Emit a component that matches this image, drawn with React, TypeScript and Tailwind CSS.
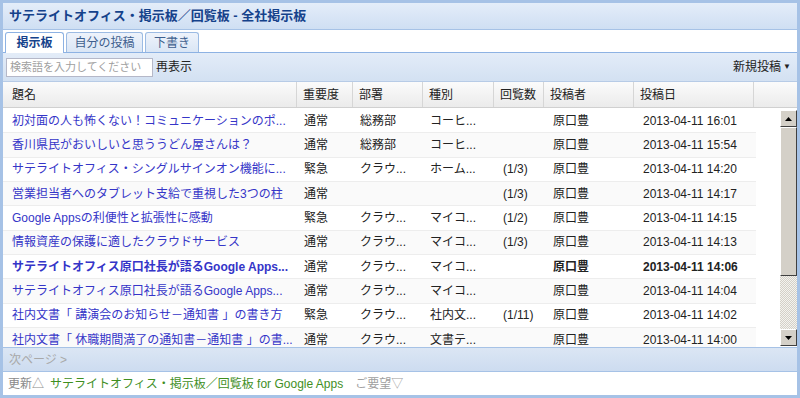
import React from 'react';

const font = "font-['Liberation_Sans','Noto_Sans_CJK_JP',sans-serif]";

const rows = [
  { title: '初対面の人も怖くない！コミュニケーションのポ...', level: '通常', dept: '総務部', kind: 'コーヒ...', count: '', author: '原口豊', date: '2013-04-11 16:01' },
  { title: '香川県民がおいしいと思ううどん屋さんは？', level: '通常', dept: '総務部', kind: 'コーヒ...', count: '', author: '原口豊', date: '2013-04-11 15:54' },
  { title: 'サテライトオフィス・シングルサインオン機能に...', level: '緊急', dept: 'クラウ...', kind: 'ホーム...', count: '(1/3)', author: '原口豊', date: '2013-04-11 14:20' },
  { title: '営業担当者へのタブレット支給で重視した3つの柱', level: '通常', dept: '', kind: '', count: '(1/3)', author: '原口豊', date: '2013-04-11 14:17' },
  { title: 'Google Appsの利便性と拡張性に感動', level: '緊急', dept: 'クラウ...', kind: 'マイコ...', count: '(1/2)', author: '原口豊', date: '2013-04-11 14:15' },
  { title: '情報資産の保護に適したクラウドサービス', level: '通常', dept: 'クラウ...', kind: 'マイコ...', count: '(1/3)', author: '原口豊', date: '2013-04-11 14:13' },
  { title: 'サテライトオフィス原口社長が語るGoogle Apps...', level: '通常', dept: 'クラウ...', kind: 'マイコ...', count: '', author: '原口豊', date: '2013-04-11 14:06', bold: true },
  { title: 'サテライトオフィス原口社長が語るGoogle Apps...', level: '通常', dept: 'クラウ...', kind: 'マイコ...', count: '', author: '原口豊', date: '2013-04-11 14:04' },
  { title: '社内文書「 講演会のお知らせ－通知書 」の書き方', level: '緊急', dept: 'クラウ...', kind: '社内文...', count: '(1/11)', author: '原口豊', date: '2013-04-11 14:02' },
  { title: '社内文書「 休職期間満了の通知書－通知書 」の書...', level: '通常', dept: 'クラウ...', kind: '文書テ...', count: '', author: '原口豊', date: '2013-04-11 14:00' },
];

const cols = ['w-[294px]', 'w-[56px]', 'w-[70px]', 'w-[71px]', 'w-[50px]', 'w-[90px]', 'w-[120px]'];

const App: React.FC = () => {
  return (
    <div className={`w-[800px] h-[398px] border-[3px] border-[#a6c2e6] bg-white flex flex-col overflow-hidden text-[12px] text-[#222] ${font}`}>
      {/* タイトル */}
      <div className="h-[27px] shrink-0 flex items-center px-[6px] bg-gradient-to-b from-[#e4edf9] to-[#cfdff3] border-b border-[#a6c2e6] text-[13px] font-bold text-[#15428b]">
        サテライトオフィス・掲示板／回覧板 - 全社掲示板
      </div>

      {/* タブ */}
      <div className="h-[23px] shrink-0 flex items-end gap-[2px] px-[2px] border-b border-[#8db2e3] bg-white">
        <div className="h-[21px] w-[59px] -mb-px flex items-center justify-center rounded-t-[3px] border border-b-0 border-[#8db2e3] bg-white font-bold text-[#15428b]">
          掲示板
        </div>
        <div className="h-[20px] w-[77px] flex items-center justify-center rounded-t-[3px] border border-b-0 border-[#9cbbe3] bg-gradient-to-b from-[#eef3fb] to-[#dae6f5] text-[#3e5f8e]">
          自分の投稿
        </div>
        <div className="h-[20px] w-[54px] flex items-center justify-center rounded-t-[3px] border border-b-0 border-[#9cbbe3] bg-gradient-to-b from-[#eef3fb] to-[#dae6f5] text-[#3e5f8e]">
          下書き
        </div>
      </div>

      {/* ツールバー */}
      <div className="h-[29px] shrink-0 flex items-center pl-[3px] pr-[6px] bg-gradient-to-b from-[#e3ecf8] to-[#d3e1f2] border-b border-[#b7cbe6]">
        <div className="w-[147px] h-[19px] flex items-center px-[3px] border border-[#b5b8c8] bg-white text-[11px] text-[#a0a0a0] whitespace-nowrap overflow-hidden">
          検索語を入力してください
        </div>
        <span className="ml-[3px]">再表示</span>
        <span className="ml-auto flex items-center gap-[2px]">
          新規投稿
          <span className="text-[8px]">▼</span>
        </span>
      </div>

      {/* ヘッダー */}
      <div className="h-[26px] shrink-0 flex bg-gradient-to-b from-[#fbfbfb] to-[#ebebeb] border-b border-[#d0d0d0]">
        {['題名', '重要度', '部署', '種別', '回覧数', '投稿者', '投稿日'].map((h, i) => (
          <div
            key={h}
            className={`${cols[i]} shrink-0 flex items-center ${i === 0 ? 'pl-[9px]' : 'pl-[6px]'} border-r border-[#d6d6d6]`}
          >
            {h}
          </div>
        ))}
        <div className="flex-1" />
      </div>

      {/* 一覧 */}
      <div className="h-[239px] shrink-0 flex overflow-hidden">
        <div className="w-[753px] shrink-0 pt-px">
          {rows.map((r, i) => (
            <div
              key={i}
              className={`h-[24.33px] flex items-center border-b border-[#ededed] ${i % 2 === 0 ? 'bg-white' : 'bg-[#fafafa]'}`}
            >
              <div className={`${cols[0]} shrink-0 pl-[9px] whitespace-nowrap overflow-hidden text-[#3535c8] ${r.bold ? 'font-bold' : ''}`}>{r.title}</div>
              <div className={`${cols[1]} shrink-0 pl-[7px] whitespace-nowrap overflow-hidden`}>{r.level}</div>
              <div className={`${cols[2]} shrink-0 pl-[7px] whitespace-nowrap overflow-hidden`}>{r.dept}</div>
              <div className={`${cols[3]} shrink-0 pl-[7px] whitespace-nowrap overflow-hidden`}>{r.kind}</div>
              <div className={`${cols[4]} shrink-0 pl-[9px] whitespace-nowrap overflow-hidden`}>{r.count}</div>
              <div className={`${cols[5]} shrink-0 pl-[9px] whitespace-nowrap overflow-hidden ${r.bold ? 'font-bold' : ''}`}>{r.author}</div>
              <div className={`${cols[6]} shrink-0 pl-[9px] whitespace-nowrap overflow-hidden ${r.bold ? 'font-bold' : ''}`}>{r.date}</div>
            </div>
          ))}
        </div>
        <div className="flex-1" />
        {/* スクロールバー */}
        <div className="w-[17px] shrink-0 flex flex-col pt-[2px] pb-px">
          <div className="h-[17px] shrink-0 flex items-center justify-center bg-[#d4d0c8] border border-t-white border-l-white border-r-[#404040] border-b-[#404040]">
            <svg width="7" height="4" viewBox="0 0 7 4"><path d="M3.5 0L7 4H0z" fill="#000" /></svg>
          </div>
          <div className="h-[149px] shrink-0 bg-[#d4d0c8] border border-t-white border-l-white border-r-[#404040] border-b-[#404040]" />
          <div className="flex-1 bg-[repeating-conic-gradient(#d4d0c8_0_25%,#f4f3ef_0_50%)] bg-[length:2px_2px]" />
          <div className="h-[17px] shrink-0 flex items-center justify-center bg-[#d4d0c8] border border-t-white border-l-white border-r-[#404040] border-b-[#404040]">
            <svg width="7" height="4" viewBox="0 0 7 4"><path d="M0 0H7L3.5 4z" fill="#000" /></svg>
          </div>
        </div>
      </div>

      {/* ページ送り */}
      <div className="h-[25px] shrink-0 flex items-center pl-[6px] bg-gradient-to-b from-[#dbe6f4] to-[#cddcf0] border-t border-[#a6c2e6] border-b text-[#a8a8a8]">
        次ページ &gt;
      </div>

      {/* フッター */}
      <div className="flex-1 flex items-center pl-[5px] gap-[6px] bg-white">
        <span className="text-[#8a8a8a]">更新△</span>
        <span className="text-[#3f8f1f]">サテライトオフィス・掲示板／回覧板 for Google Apps</span>
        <span className="text-[#a0a0a0] ml-[6px]">ご要望▽</span>
      </div>
    </div>
  );
};

export default App;
